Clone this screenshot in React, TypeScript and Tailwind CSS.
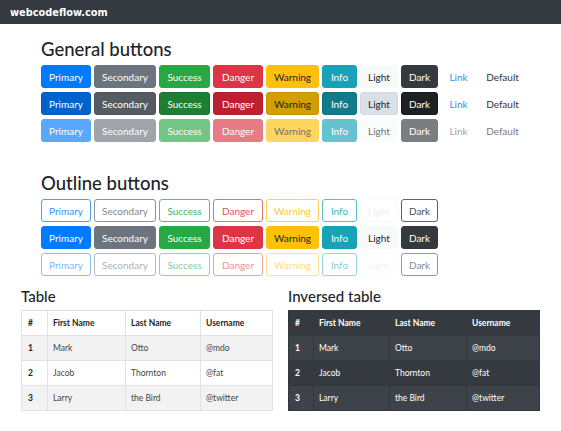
import React from "react";

type Btn = {
  label: string;
  w: string;
  base: string;
  active: string;
  outline?: string;
};

const buttons: Btn[] = [
  {
    label: "Primary",
    w: "w-[50px]",
    base: "bg-[#007bff] border-[#007bff] text-white",
    active: "bg-[#0062cc] border-[#005cbf] text-white",
    outline: "bg-white border-[#4d9fff] text-[#3a8fff]",
  },
  {
    label: "Secondary",
    w: "w-[62px]",
    base: "bg-[#6c757d] border-[#6c757d] text-white",
    active: "bg-[#545b62] border-[#4e555b] text-white",
    outline: "bg-white border-[#8a9197] text-[#80878d]",
  },
  {
    label: "Success",
    w: "w-[51px]",
    base: "bg-[#28a745] border-[#28a745] text-white",
    active: "bg-[#1e7e34] border-[#1c7430] text-white",
    outline: "bg-white border-[#5cbd73] text-[#45b360]",
  },
  {
    label: "Danger",
    w: "w-[50px]",
    base: "bg-[#dc3545] border-[#dc3545] text-white",
    active: "bg-[#bd2130] border-[#b21f2d] text-white",
    outline: "bg-white border-[#e5707b] text-[#e0525f]",
  },
  {
    label: "Warning",
    w: "w-[53px]",
    base: "bg-[#ffc107] border-[#ffc107] text-[#212529]",
    active: "bg-[#d39e00] border-[#c69500] text-[#212529]",
    outline: "bg-white border-[#ffd34d] text-[#ffc93a]",
  },
  {
    label: "Info",
    w: "w-[35px]",
    base: "bg-[#17a2b8] border-[#17a2b8] text-white",
    active: "bg-[#117a8b] border-[#10707f] text-white",
    outline: "bg-white border-[#5cbecd] text-[#45b4c5]",
  },
  {
    label: "Light",
    w: "w-[38px]",
    base: "bg-[#f8f9fa] border-[#f8f9fa] text-[#212529]",
    active: "bg-[#dae0e5] border-[#d3d9df] text-[#212529]",
    outline: "bg-white border-[#f8f9fa] text-[#eef0f2]",
  },
  {
    label: "Dark",
    w: "w-[37px]",
    base: "bg-[#343a40] border-[#343a40] text-white",
    active: "bg-[#1d2124] border-[#171a1d] text-white",
    outline: "bg-white border-[#5d6166] text-[#4a4f55]",
  },
  {
    label: "Link",
    w: "w-[35px]",
    base: "border-transparent text-[#2f8cff]",
    active: "border-transparent text-[#2f8cff]",
  },
  {
    label: "Default",
    w: "w-[47px]",
    base: "border-transparent text-[#333]",
    active: "border-transparent text-[#333]",
  },
];

function Button({ label, w, cls }: { label: string; w: string; cls: string }) {
  return (
    <button
      type="button"
      className={`${w} ${cls} h-[23px] shrink-0 rounded-[3px] border text-center text-[10px] leading-none`}
    >
      {label}
    </button>
  );
}

function Heading({ children }: { children: React.ReactNode }) {
  return (
    <h2 className="mb-[4px] text-[18.5px] font-medium leading-[23px] text-[#212529]">{children}</h2>
  );
}

const rows = [
  ["1", "Mark", "Otto", "@mdo"],
  ["2", "Jacob", "Thornton", "@fat"],
  ["3", "Larry", "the Bird", "@twitter"],
];

function DataTable({ dark, cols }: { dark?: boolean; cols: number[] }) {
  const cell = dark ? "border border-[#32383e]" : "border border-[#dee2e6]";
  return (
    <table
      className={`w-[251px] table-fixed border-collapse text-[8.5px] ${
        dark ? "bg-[#343a40] text-white" : "bg-white text-[#444]"
      }`}
    >
      <colgroup>
        {cols.map((c, i) => (
          <col key={i} style={{ width: c }} />
        ))}
      </colgroup>
      <thead>
        <tr className="h-[25px]">
          {["#", "First Name", "Last Name", "Username"].map((h, i) => (
            <th
              key={h}
              className={`${cell} ${i === 0 ? "px-[6px]" : "px-[5px]"} text-left font-bold ${
                dark ? "text-white" : "text-[#212529]"
              }`}
            >
              {h}
            </th>
          ))}
        </tr>
      </thead>
      <tbody>
        {rows.map((r, ri) => (
          <tr
            key={r[0]}
            className={`h-[25px] ${ri % 2 === 0 ? (dark ? "bg-[#3d4349]" : "bg-[#f2f2f2]") : ""}`}
          >
            {r.map((v, i) =>
              i === 0 ? (
                <th
                  key={i}
                  className={`${cell} px-[6px] text-left font-bold ${dark ? "text-white" : "text-[#212529]"}`}
                >
                  {v}
                </th>
              ) : (
                <td key={i} className={`${cell} px-[5px]`}>
                  {v}
                </td>
              ),
            )}
          </tr>
        ))}
      </tbody>
    </table>
  );
}

export default function App() {
  const outlineBtns = buttons.filter((b) => b.outline);
  return (
    <div className="h-[431px] w-[561px] overflow-hidden bg-white font-['Lato',sans-serif]">
      <header className="flex h-[24px] items-center bg-[#343a40] pl-[10px] pt-[2px]">
        <span className="font-['DejaVu_Sans',sans-serif] text-[9.8px] font-bold text-white">
          webcodeflow.com
        </span>
      </header>

      <section className="pl-[41px] pt-[14px]">
        <Heading>General buttons</Heading>
        <div className="flex flex-col gap-[4px]">
          <div className="flex gap-[3px]">
            {buttons.map((b) => (
              <Button key={b.label} label={b.label} w={b.w} cls={b.base} />
            ))}
          </div>
          <div className="flex gap-[3px]">
            {buttons.map((b) => (
              <Button key={b.label} label={b.label} w={b.w} cls={b.active} />
            ))}
          </div>
          <div className="flex gap-[3px]">
            {buttons.map((b) => (
              <Button
                key={b.label}
                label={b.label}
                w={b.w}
                cls={`${b.label === "Link" ? "border-transparent text-[#6c757d]" : b.base} opacity-65`}
              />
            ))}
          </div>
        </div>
      </section>

      <section className="mt-[30px] pl-[41px]">
        <Heading>Outline buttons</Heading>
        <div className="flex flex-col gap-[4px]">
          <div className="flex gap-[3px]">
            {outlineBtns.map((b) => (
              <Button key={b.label} label={b.label} w={b.w} cls={b.outline!} />
            ))}
          </div>
          <div className="flex gap-[3px]">
            {outlineBtns.map((b) => (
              <Button key={b.label} label={b.label} w={b.w} cls={b.base} />
            ))}
          </div>
          <div className="flex gap-[3px]">
            {outlineBtns.map((b) => (
              <Button key={b.label} label={b.label} w={b.w} cls={`${b.outline} opacity-65`} />
            ))}
          </div>
        </div>
      </section>

      <section className="mt-[11px] flex gap-[15px] pl-[21px]">
        <div>
          <h3 className="mb-[5px] text-[15px] font-medium leading-[18px] text-[#212529]">Table</h3>
          <DataTable cols={[26, 78, 75, 72]} />
        </div>
        <div>
          <h3 className="mb-[5px] text-[15px] font-medium leading-[18px] text-[#212529]">Inversed table</h3>
          <DataTable dark cols={[25, 76, 77, 73]} />
        </div>
      </section>
    </div>
  );
}
